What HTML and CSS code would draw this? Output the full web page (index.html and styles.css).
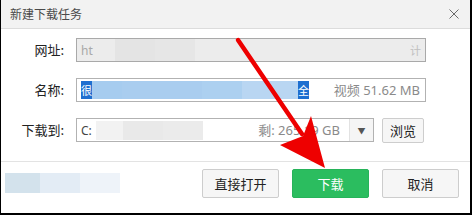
FILE: index.html
```html
<!DOCTYPE html>
<html lang="zh-CN">
<head>
<meta charset="utf-8">
<title>新建下载任务</title>
<link rel="stylesheet" href="styles.css">
</head>
<body>
<div class="win">
  <div class="titlebar">
    <span class="title">新建下载任务</span>
    <span class="close">
      <svg width="10" height="10" viewBox="0 0 10 10"><path d="M0.5 0.5 L9.5 9.5 M9.5 0.5 L0.5 9.5" stroke="#6a6a6a" stroke-width="1" fill="none"/></svg>
    </span>
  </div>
  <div class="form">
    <div class="row">
      <span class="lbl">网址:</span>
      <div class="field field-disabled">
        <span class="txt-gray">ht</span>
        <span class="blur"><i class="b1"></i><i class="b2"></i></span>
        <span class="spacer"></span>
        <span class="txt-faint">计</span>
      </div>
    </div>
    <div class="row">
      <span class="lbl">名称:</span>
      <div class="field">
        <span class="sel">
          <span class="sel-strong">很</span>
          <span class="sel-soft"><i class="s1"></i><i class="s2"></i><i class="s3"></i><i class="s4"></i></span>
          <span class="sel-strong sel-end">全</span>
        </span>
        <span class="spacer"></span>
        <span class="txt-meta">视频 51.62 MB</span>
      </div>
    </div>
    <div class="row">
      <span class="lbl">下载到:</span>
      <div class="field field-path">
        <span class="txt-dark">C:</span>
        <span class="blur blur-path"><i class="p1"></i><i class="p2"></i><i class="p3"></i></span>
        <span class="spacer"></span>
        <span class="txt-meta">剩: 265.19 GB</span>
        <span class="dropdown">▼</span>
      </div>
      <span class="btn btn-small">浏览</span>
    </div>
  </div>
  <div class="footer">
    <div class="footer-blur"><i class="f1"></i><i class="f2"></i><i class="f3"></i></div>
    <div class="actions">
      <span class="btn btn-large">直接打开</span>
      <span class="btn btn-large btn-green">下载</span>
      <span class="btn btn-large">取消</span>
    </div>
  </div>
  <svg class="arrow" width="469" height="213" viewBox="0 0 469 213">
    <line x1="237" y1="40" x2="301" y2="134" stroke="#ee0000" stroke-width="4.5" stroke-linecap="round"/>
    <polygon points="324,168 279,145 302,136 310,116" fill="#ee0000"/>
  </svg>
</div>
</body>
</html>
```

FILE: styles.css
```css
html, body {
  margin: 0;
  padding: 0;
}
body {
  background: #000;
  width: 472px;
  height: 215px;
  overflow: hidden;
  font-family: "Noto Sans", "Noto Sans CJK SC", sans-serif;
  font-size: 13px;
  color: #333;
}
.win {
  position: relative;
  width: 469px;
  height: 213px;
  margin-left: 1px;
  background: #fff;
  display: flex;
  flex-direction: column;
}
.titlebar {
  height: 28px;
  flex: none;
  background: #f2f2f2;
  border-bottom: 1px solid #dcdcdc;
  display: flex;
  align-items: center;
  padding: 0 11px 0 9px;
}
.title {
  font-family: "Noto Sans CJK SC", sans-serif;
  font-size: 12px;
  color: #4a4a4a;
  line-height: 16px;
  margin-top: -1px;
  flex: 1;
}
.close {
  display: flex;
  width: 10px;
  height: 10px;
}
.form {
  flex: 1;
  padding-top: 9px;
  display: flex;
  flex-direction: column;
  gap: 16px;
}
.row {
  display: flex;
  align-items: center;
  height: 24px;
  gap: 8px;
}
.lbl {
  width: 63px;
  margin-right: 4px;
  text-align: right;
  font-family: "Noto Sans CJK SC", sans-serif;
  font-size: 13px;
  color: #222;
  line-height: 18px;
}
.field {
  box-sizing: border-box;
  width: 350px;
  height: 24px;
  border: 1px solid #b2b2b2;
  background: #fff;
  display: flex;
  align-items: center;
  padding-left: 4px;
  padding-right: 4px;
  line-height: 17px;
}
.field-disabled {
  background: #ececec;
  border-color: #a9a9a9;
}
.field-path {
  width: 298px;
  padding-right: 0;
}
.spacer {
  flex: 1;
}
.txt-gray {
  color: #a8a8a8;
  font-size: 12px;
}
.txt-faint {
  color: #c0c0c0;
  font-family: "Noto Sans CJK SC", sans-serif;
  font-size: 11px;
}
.txt-dark {
  color: #444;
  font-size: 12px;
}
.txt-meta {
  color: #8a8a8a;
  font-size: 13px;
  margin-right: 1px;
}
.blur {
  display: flex;
  height: 22px;
  margin-left: 22px;
}
.blur i {
  display: block;
  height: 22px;
}
.b1 { width: 40px; background: #e4e4e4; }
.b2 { width: 40px; background: #e6e6e6; }
.blur-path {
  margin-left: 4px;
  height: 19px;
}
.blur-path i { height: 19px; }
.p1 { width: 27px; background: #f2f2f2; }
.p2 { width: 40px; background: #e9e9e9; }
.p3 { width: 40px; background: #ebebeb; }
.sel {
  display: flex;
  height: 18px;
  align-items: stretch;
}
.sel-strong {
  background: #1e6fd0;
  color: #fff;
  font-family: "Noto Sans CJK SC", sans-serif;
  font-size: 11px;
  line-height: 18px;
  white-space: nowrap;
}
.sel-soft {
  display: flex;
}
.sel-soft i {
  display: block;
}
.s1 { width: 30px; background: #a6ccef; }
.s2 { width: 80px; background: #a9cdef; }
.s3 { width: 40px; background: #acd0f0; }
.s4 { width: 56px; background: #b9d6f2; }
.dropdown {
  align-self: stretch;
  width: 23px;
  margin-left: 8px;
  background: #f5f5f5;
  border-left: 1px solid #e2e2e2;
  color: #555;
  font-size: 8px;
  display: flex;
  align-items: center;
  justify-content: center;
}
.btn {
  box-sizing: border-box;
  display: flex;
  align-items: center;
  justify-content: center;
  border: 1px solid #cdcdcd;
  border-radius: 2px;
  background: #f6f6f6;
  color: #222;
  font-family: "Noto Sans CJK SC", sans-serif;
  font-size: 13px;
}
.btn-small {
  width: 42px;
  height: 25px;
}
.footer {
  flex: none;
  height: 44px;
  border-top: 1px solid #e3e3e3;
  display: flex;
  justify-content: space-between;
  align-items: flex-start;
  padding: 7px 11px 0 4px;
}
.footer-blur {
  display: flex;
  margin-top: 4px;
  height: 20px;
}
.footer-blur i {
  display: block;
  height: 20px;
}
.f1 { width: 35px; background: #d3e2ec; }
.f2 { width: 40px; background: #e3ecf5; }
.f3 { width: 40px; background: #eef3f9; }
.actions {
  display: flex;
  gap: 13px;
}
.btn-large {
  width: 77px;
  height: 29px;
}
.btn-green {
  background: #2bbd5f;
  border-color: #27b35a;
  color: #fff;
}
.arrow {
  position: absolute;
  left: 0;
  top: 0;
  pointer-events: none;
}
```
